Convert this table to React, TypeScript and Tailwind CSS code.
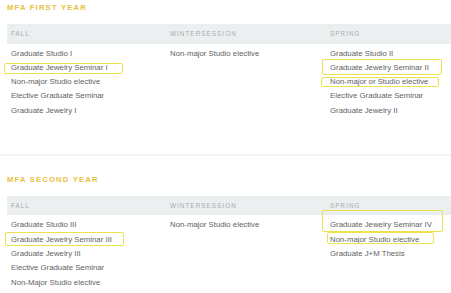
const FONT = { fontFamily: '"Liberation Sans", Arial, sans-serif' };

type Year = {
  title: string;
  fall: string[];
  winter: string[];
  spring: string[];
};

const YEARS: Year[] = [
  {
    title: "MFA FIRST YEAR",
    fall: [
      "Graduate Studio I",
      "Graduate Jewelry Seminar I",
      "Non-major Studio elective",
      "Elective Graduate Seminar",
      "Graduate Jewelry I",
    ],
    winter: ["Non-major Studio elective"],
    spring: [
      "Graduate Studio II",
      "Graduate Jewelry Seminar II",
      "Non-major or Studio elective",
      "Elective Graduate Seminar",
      "Graduate Jewelry II",
    ],
  },
  {
    title: "MFA SECOND YEAR",
    fall: [
      "Graduate Studio III",
      "Graduate Jewelry Seminar III",
      "Graduate Jewelry III",
      "Elective Graduate Seminar",
      "Non-Major Studio elective",
    ],
    winter: ["Non-major Studio elective"],
    spring: [
      "Graduate Jewelry Seminar IV",
      "Non-major Studio elective",
      "Graduate J+M Thesis",
    ],
  },
];

// hand-drawn highlight boxes, page coordinates
const MARKS = [
  { l: 4, t: 63, w: 119, h: 11 },
  { l: 322, t: 59, w: 120, h: 16 },
  { l: 321, t: 77, w: 118, h: 10 },
  { l: 5, t: 232, w: 119, h: 14 },
  { l: 322, t: 210, w: 121, h: 22 },
  { l: 327, t: 232, w: 107, h: 12 },
];

function Column({ items }: { items: string[] }) {
  return (
    <ul className="pl-[4px] pt-[3px]">
      {items.map((c, i) => (
        <li key={i} className="h-[14.3px] leading-[14.3px] text-[7.8px] text-[#5f6265] whitespace-nowrap">
          {c}
        </li>
      ))}
    </ul>
  );
}

function YearBlock({ year, first }: { year: Year; first: boolean }) {
  return (
    <section className={first ? "pt-[3px] pb-[36px]" : "pt-[19px]"}>
      <h2 className="pl-[7px] h-[10px] leading-[10px] text-[7.6px] font-bold tracking-[0.16em] text-[#e9c03e] mb-[11px]">
        {year.title}
      </h2>
      <div className="ml-[7px]">
        <div className="grid grid-cols-[159px_160px_1fr] h-[19.5px] items-center bg-[#eceff0] text-[6.3px] tracking-[0.17em] text-[#a7acaf]">
          <span className="pl-[4px]">FALL</span>
          <span className="pl-[4px]">WINTERSESSION</span>
          <span className="pl-[4px]">SPRING</span>
        </div>
        <div className="grid grid-cols-[159px_160px_1fr]">
          <Column items={year.fall} />
          <Column items={year.winter} />
          <Column items={year.spring} />
        </div>
      </div>
    </section>
  );
}

export default function App() {
  return (
    <div className="relative w-[451px] h-[293px] overflow-hidden bg-white" style={FONT}>
      <YearBlock year={YEARS[0]} first />
      <div className="h-[2px] bg-[#f4f5f5]" />
      <YearBlock year={YEARS[1]} first={false} />
      {MARKS.map((m, i) => (
        <div
          key={i}
          className="absolute border-[1.5px] border-[#eee24c] rounded-[2px]"
          style={{ left: m.l, top: m.t, width: m.w, height: m.h }}
        />
      ))}
    </div>
  );
}
